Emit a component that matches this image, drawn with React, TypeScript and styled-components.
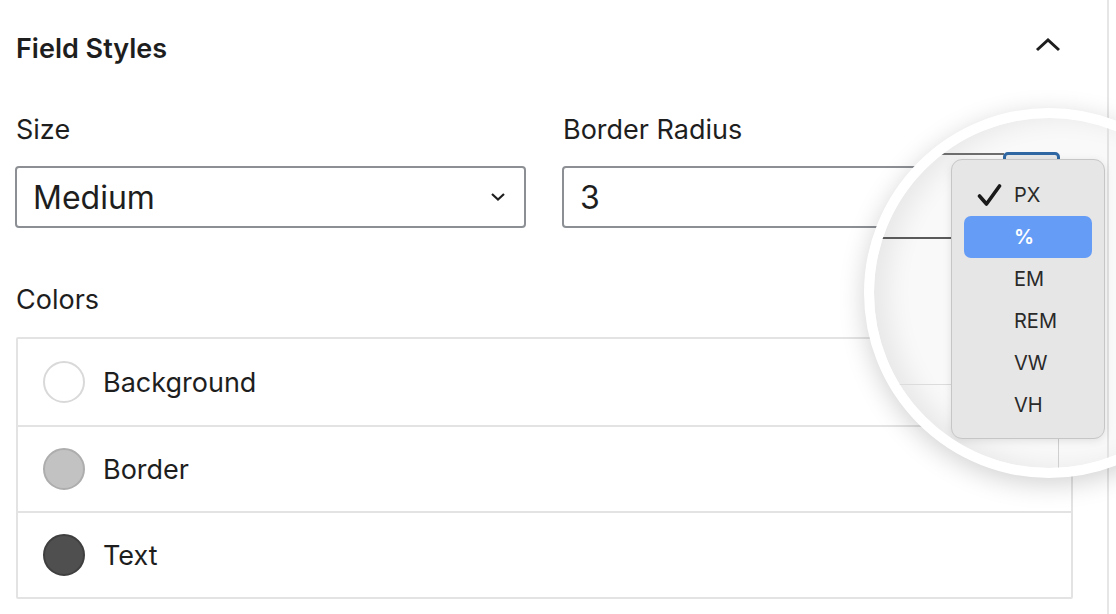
import React from 'react';
import styled, { createGlobalStyle } from 'styled-components';

const GlobalStyle = createGlobalStyle`
  html, body { margin: 0; padding: 0; background: #fff; }
  body { font-family: Inter, "Noto Sans", sans-serif; color: #1e1e1e; }
  * { box-sizing: border-box; }
`;

interface Swatch {
  label: string;
  fill: string;
  ring: string;
}

const colors: Swatch[] = [
  { label: 'Background', fill: '#ffffff', ring: '#d9d9d9' },
  { label: 'Border', fill: '#c2c2c2', ring: '#adadad' },
  { label: 'Text', fill: '#4f4f4f', ring: '#3f3f3f' },
];

const units = ['PX', '%', 'EM', 'REM', 'VW', 'VH'];

const ChevronUp = () => (
  <svg width="26" height="14" viewBox="0 0 26 14" fill="none">
    <path d="M2 12L13 2L24 12" stroke="#1e1e1e" strokeWidth="3" />
  </svg>
);

const ChevronDown = () => (
  <svg width="16" height="10" viewBox="0 0 16 10" fill="none">
    <path d="M2 2L8 7.5L14 2" stroke="#1e1e1e" strokeWidth="2.2" />
  </svg>
);

const Check = () => (
  <svg width="25" height="24" viewBox="0 0 25 24" fill="none">
    <path d="M2.5 13L9.5 21L22.5 3" stroke="#1a1a1a" strokeWidth="3.6" strokeLinecap="round" strokeLinejoin="round" />
  </svg>
);

const App: React.FC = () => {
  return (
    <Page>
      <GlobalStyle />
      <Sidebar>
        <Header>
          <Title>Field Styles</Title>
          <Toggle><ChevronUp /></Toggle>
        </Header>

        <FieldGrid>
          <Field>
            <Label>Size</Label>
            <SelectBox>
              <span>Medium</span>
              <ChevronDown />
            </SelectBox>
          </Field>
          <Field>
            <Label>Border Radius</Label>
            <InputBox>3</InputBox>
          </Field>
        </FieldGrid>

        <ColorsLabel>Colors</ColorsLabel>
        <ColorList>
          {colors.map((c) => (
            <ColorRow key={c.label}>
              <Dot $fill={c.fill} $ring={c.ring} />
              <span>{c.label}</span>
            </ColorRow>
          ))}
        </ColorList>
      </Sidebar>

      <Lens>
        <LensLine $x={0} $y={35} $w={130} $h={2} $c="#6e6e6e" />
        <UnitButton />
        <LensLine $x={0} $y={119} $w={78} $h={2} $c="#5a5a5a" />
        <LensLine $x={0} $y={266} $w={78} $h={1} $c="#dcdcdc" />
        <LensLine $x={184} $y={320} $w={1} $h={60} $c="#cfcfcf" />
        <LensLine $x={233} $y={0} $w={2} $h={360} $c="#e2e2e2" />
        <Menu>
          {units.map((u, i) => (
            <MenuItem key={u} $active={u === '%'}>
              <CheckSlot>{i === 0 && <Check />}</CheckSlot>
              {u}
            </MenuItem>
          ))}
        </Menu>
      </Lens>
    </Page>
  );
};

const Page = styled.div`
  position: relative;
  width: 1116px;
  height: 614px;
  overflow: hidden;
  background: #fff;
`;

const Sidebar = styled.div`
  width: 1109px;
  height: 100%;
  border-right: 2px solid #e6e6e6;
  padding: 0 34px 0 16px;
`;

const Header = styled.div`
  display: flex;
  align-items: center;
  justify-content: space-between;
  height: 96px;
`;

const Title = styled.h2`
  margin: 0;
  font-size: 27px;
  font-weight: 600;
  color: #1e1e1e;
`;

const Toggle = styled.div`
  display: flex;
  margin-right: 12px;
  margin-bottom: 6px;
`;

const FieldGrid = styled.div`
  display: grid;
  grid-template-columns: 1fr 1fr;
  column-gap: 36px;
  margin-top: 18px;
  margin-left: -1px;
`;

const Field = styled.div`
  display: flex;
  flex-direction: column;
`;

const Label = styled.div`
  font-size: 27px;
  line-height: 32px;
  color: #1e1e1e;
  margin-bottom: 20px;
  padding-left: 1px;
`;

const SelectBox = styled.div`
  height: 62px;
  display: flex;
  align-items: center;
  justify-content: space-between;
  padding: 0 18px 0 16px;
  border: 2px solid #8c8f94;
  border-radius: 4px;
  font-size: 32px;
  color: #1e1e1e;
`;

const InputBox = styled(SelectBox)`
  justify-content: flex-start;
`;

const ColorsLabel = styled(Label)`
  margin: 56px 0 21px;
  padding-left: 0;
`;

const ColorList = styled.div`
  border: 2px solid #e3e3e3;
  border-radius: 2px;
`;

const ColorRow = styled.div`
  height: 86px;
  display: flex;
  align-items: center;
  gap: 18px;
  padding-left: 25px;
  font-size: 27px;
  color: #1e1e1e;
  & + & {
    border-top: 2px solid #e3e3e3;
  }
`;

const Dot = styled.div<{ $fill: string; $ring: string }>`
  width: 42px;
  height: 42px;
  border-radius: 50%;
  background: ${(p) => p.$fill};
  border: 2px solid ${(p) => p.$ring};
`;

const Lens = styled.div`
  position: absolute;
  left: 864px;
  top: 108px;
  width: 370px;
  height: 370px;
  border-radius: 50%;
  border: 10px solid #fff;
  background: #f9f9f9;
  box-shadow: 0 6px 26px rgba(0, 0, 0, 0.18), inset 14px 0 26px rgba(0, 0, 0, 0.07);
  overflow: hidden;
`;

const LensLine = styled.div<{ $x: number; $y: number; $w: number; $h: number; $c: string }>`
  position: absolute;
  left: ${(p) => p.$x}px;
  top: ${(p) => p.$y}px;
  width: ${(p) => p.$w}px;
  height: ${(p) => p.$h}px;
  background: ${(p) => p.$c};
`;

const UnitButton = styled.div`
  position: absolute;
  left: 129px;
  top: 34px;
  width: 57px;
  height: 30px;
  border: 3px solid #2f68a3;
  border-radius: 5px;
  background: #e9e9e9;
`;

const Menu = styled.div`
  position: absolute;
  left: 77px;
  top: 41px;
  width: 154px;
  height: 280px;
  padding: 14px 12px;
  display: flex;
  flex-direction: column;
  background: #e7e6e7;
  border: 1px solid #c6c6c6;
  border-radius: 11px;
  box-shadow: 0 2px 8px rgba(0, 0, 0, 0.1);
`;

const MenuItem = styled.div<{ $active?: boolean }>`
  height: 42px;
  flex-shrink: 0;
  display: flex;
  align-items: center;
  padding-left: 13px;
  border-radius: 7px;
  font-size: 20px;
  font-weight: ${(p) => (p.$active ? 600 : 400)};
  color: ${(p) => (p.$active ? '#fff' : '#2a2a2a')};
  background: ${(p) => (p.$active ? '#659cf6' : 'transparent')};
`;

const CheckSlot = styled.span`
  display: flex;
  width: 25px;
  margin-right: 12px;
`;

export default App;
